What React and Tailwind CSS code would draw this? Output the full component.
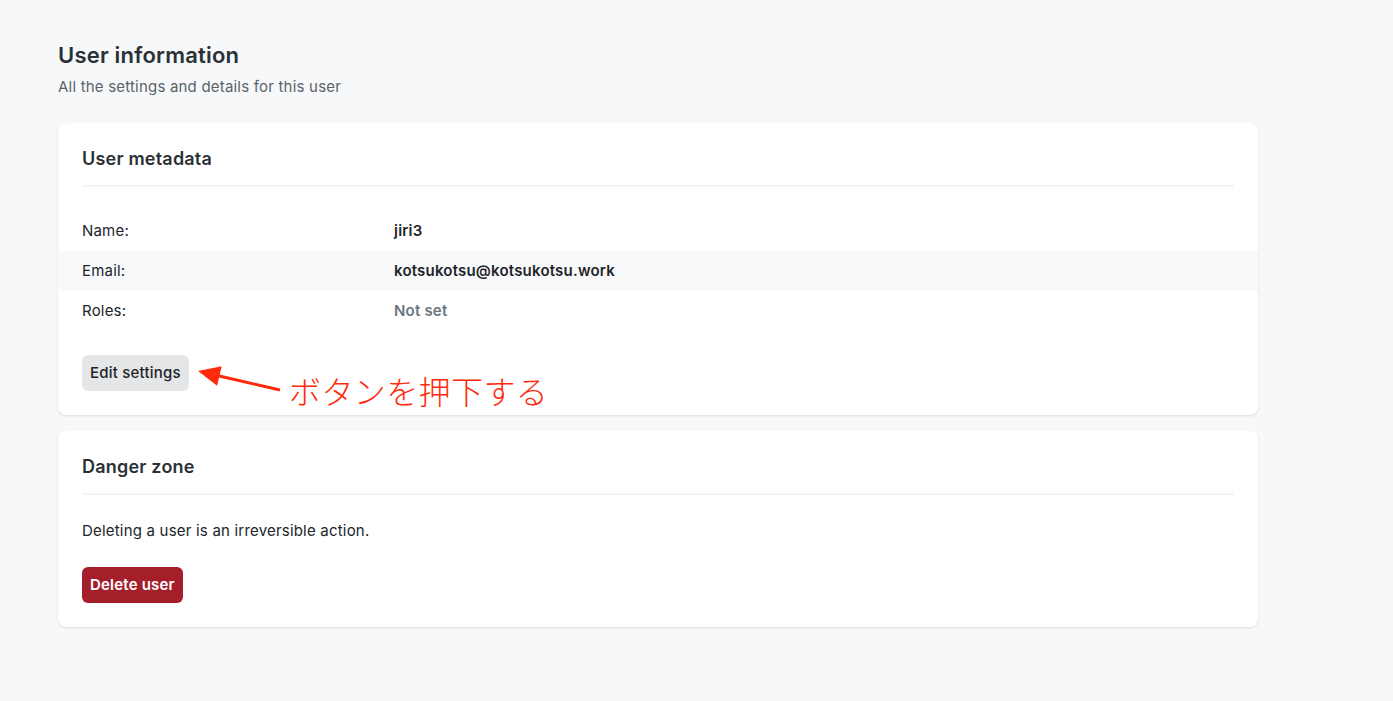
const rows = [
  { label: "Name:", value: "jiri3" },
  { label: "Email:", value: "kotsukotsu@kotsukotsu.work", striped: true },
  { label: "Roles:", value: "Not set", muted: true },
];

const Card = ({ title, children }) => (
  <section className="w-[1200px] rounded-lg bg-white p-6 shadow-[0_1px_3px_rgba(0,0,0,0.08),0_1px_2px_rgba(0,0,0,0.04)]">
    <h2 className="border-b-2 border-[#f1f3f4] pb-[14px] text-lg font-semibold leading-6 text-[#2a3136]">
      {title}
    </h2>
    {children}
  </section>
);

// red annotation arrow pointing at the button
const Arrow = () => (
  <svg width="86" height="32" viewBox="0 0 86 32" className="absolute left-[115px] top-[7px]">
    <line x1="83" y1="28" x2="18" y2="13" stroke="#ff2a0c" strokeWidth="3" />
    <polygon points="1,9 24.7,4.3 20.1,23.7" fill="#ff2a0c" />
  </svg>
);

export default function App() {
  return (
    <div className="min-h-[701px] bg-[#f6f8f9] px-[58px] pt-[41px] font-['Inter',_'Noto_Sans',sans-serif] tracking-[0.2px] text-[#212529]">
      <h1 className="text-[22px] font-semibold leading-7 text-[#2a3136]">User information</h1>
      <p className="mt-1.5 text-[15px] leading-6 text-[#5b6369]">All the settings and details for this user</p>

      <div className="mt-6 flex flex-col gap-4">
        <Card title="User metadata">
          <div className="-mx-6 mt-6">
            {rows.map((r) => (
              <div
                key={r.label}
                className={`flex h-10 items-center px-6 text-[15px] ${r.striped ? "bg-[#f8f9fa]" : ""}`}
              >
                <span className="w-[312px] shrink-0">{r.label}</span>
                <span className={`font-semibold ${r.muted ? "text-[#6c757d]" : "text-[#1e2428]"}`}>
                  {r.value}
                </span>
              </div>
            ))}
          </div>
          <div className="relative mt-6">
            <button className="h-9 rounded-md bg-[#e4e6e7] px-2 text-[15px] font-medium text-[#1e2428]">
              Edit settings
            </button>
            <Arrow />
            <span className="absolute left-[207px] top-[19px] whitespace-nowrap font-['Noto_Sans_CJK_JP',sans-serif] text-[32px] font-light leading-8 tracking-[0.4px] text-[#ff2a0c]">
              ボタンを押下する
            </span>
          </div>
        </Card>

        <Card title="Danger zone">
          <p className="mt-6 text-[15px] leading-6">Deleting a user is an irreversible action.</p>
          <button className="mt-6 h-9 rounded-md bg-[#a51f2b] px-2 text-[15px] font-semibold text-white">
            Delete user
          </button>
        </Card>
      </div>
    </div>
  );
}
